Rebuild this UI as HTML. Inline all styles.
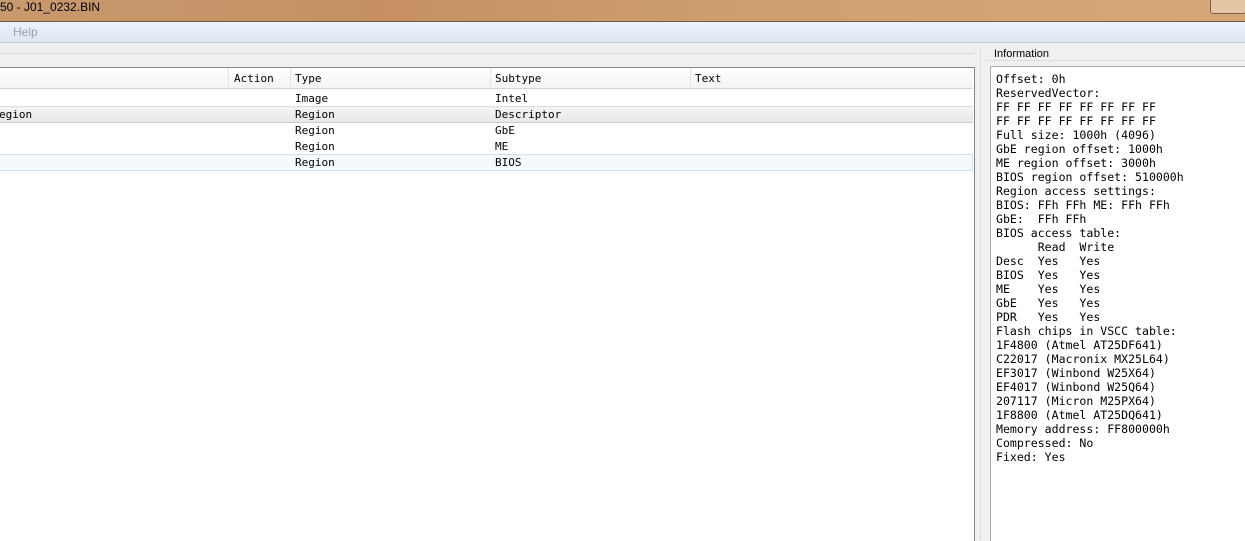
<!DOCTYPE html>
<html><head><style>
body{margin:0;width:1245px;height:540px;overflow:hidden;background:#f0f0f0;position:relative;font-family:"Liberation Mono",monospace;}
.abs{position:absolute}
.mono{font-family:"DejaVu Sans Mono","Liberation Mono",monospace;font-size:11px;color:#000}
</style></head><body>
<div class="abs" style="left:0;top:0;width:1245px;height:21px;background:linear-gradient(90deg,#c79a6e,#c58f63 30%,#cf9f70 60%,#d4a878);"></div>
<div class="abs" style="left:0;top:0;font-family:'Liberation Sans',sans-serif;font-size:12px;color:#000;line-height:14px;">50 - J01_0232.BIN</div>
<div class="abs" style="left:1210px;top:-2px;width:34px;height:14px;border:1px solid #7a6050;border-radius:3px;background:#e5c6a4"></div>
<div class="abs" style="left:0;top:21px;width:1245px;height:1px;background:#6a5a50"></div>
<div class="abs" style="left:0;top:22px;width:1245px;height:20px;background:linear-gradient(#eef3fb,#dde6f3);"></div>
<div class="abs" style="left:13px;top:25px;font-family:'Liberation Sans',sans-serif;font-size:12px;color:#9aa2ad">Help</div>
<div class="abs" style="left:0;top:42px;width:1245px;height:1px;background:#c5cdd8"></div>
<div class="abs" style="left:0;top:53px;width:975px;height:1px;background:#d8d8d8"></div>
<div class="abs" style="left:0;top:67px;width:974px;height:473px;background:#fff;border-top:1px solid #828790;border-right:1px solid #828790;"></div>
<div class="abs" style="left:0;top:68px;width:973px;height:20px;background:linear-gradient(#fff,#f3f4f6);border-bottom:1px solid #d5d5d5"></div>
<div class="abs" style="left:228px;top:68px;width:1px;height:20px;background:#e3e3e3"></div>
<div class="abs" style="left:290px;top:68px;width:1px;height:20px;background:#e3e3e3"></div>
<div class="abs" style="left:490px;top:68px;width:1px;height:20px;background:#e3e3e3"></div>
<div class="abs" style="left:690px;top:68px;width:1px;height:20px;background:#e3e3e3"></div>
<div class="abs mono" style="left:234px;top:72px">Action</div>
<div class="abs mono" style="left:295px;top:72px">Type</div>
<div class="abs mono" style="left:495px;top:72px">Subtype</div>
<div class="abs mono" style="left:695px;top:72px">Text</div>
<div class="abs" style="left:0;top:106px;width:973px;height:15px;background:linear-gradient(#f4f4f4,#e8e8e8);border-top:1px solid #ddd;border-bottom:1px solid #ccc"></div>
<div class="abs" style="left:0;top:154px;width:972px;height:15px;background:#f4f9fd;border:1px solid #d0e2f0;border-left:none"></div>
<div class="abs mono" style="left:295px;top:91px;line-height:16px">Image<br>Region<br>Region<br>Region<br>Region</div>
<div class="abs mono" style="left:495px;top:91px;line-height:16px">Intel<br>Descriptor<br>GbE<br>ME<br>BIOS</div>
<div class="abs mono" style="left:-1px;top:107px;line-height:16px">egion</div>
<div class="abs" style="left:980px;top:48px;width:1px;height:492px;background:#dcdcdc"></div>
<div class="abs" style="left:986px;top:60px;width:259px;height:1px;background:#dcdcdc"></div>
<div class="abs" style="left:992px;top:48px;padding:0 2px;background:#f0f0f0;font-family:'Liberation Sans',sans-serif;font-size:11px;color:#000">Information</div>
<div class="abs" style="left:990px;top:66px;width:255px;height:474px;background:#fff;border-top:1px solid #abadb3;border-left:1px solid #abadb3"></div>
<pre class="abs mono" style="left:996px;top:72px;margin:0;line-height:14px;font-family:'DejaVu Sans Mono','Liberation Mono',monospace;font-size:11.55px">Offset: 0h
ReservedVector:
FF FF FF FF FF FF FF FF
FF FF FF FF FF FF FF FF
Full size: 1000h (4096)
GbE region offset: 1000h
ME region offset: 3000h
BIOS region offset: 510000h
Region access settings:
BIOS: FFh FFh ME: FFh FFh
GbE:  FFh FFh
BIOS access table:
      Read  Write
Desc  Yes   Yes
BIOS  Yes   Yes
ME    Yes   Yes
GbE   Yes   Yes
PDR   Yes   Yes
Flash chips in VSCC table:
1F4800 (Atmel AT25DF641)
C22017 (Macronix MX25L64)
EF3017 (Winbond W25X64)
EF4017 (Winbond W25Q64)
207117 (Micron M25PX64)
1F8800 (Atmel AT25DQ641)
Memory address: FF800000h
Compressed: No
Fixed: Yes</pre>
</body></html>
